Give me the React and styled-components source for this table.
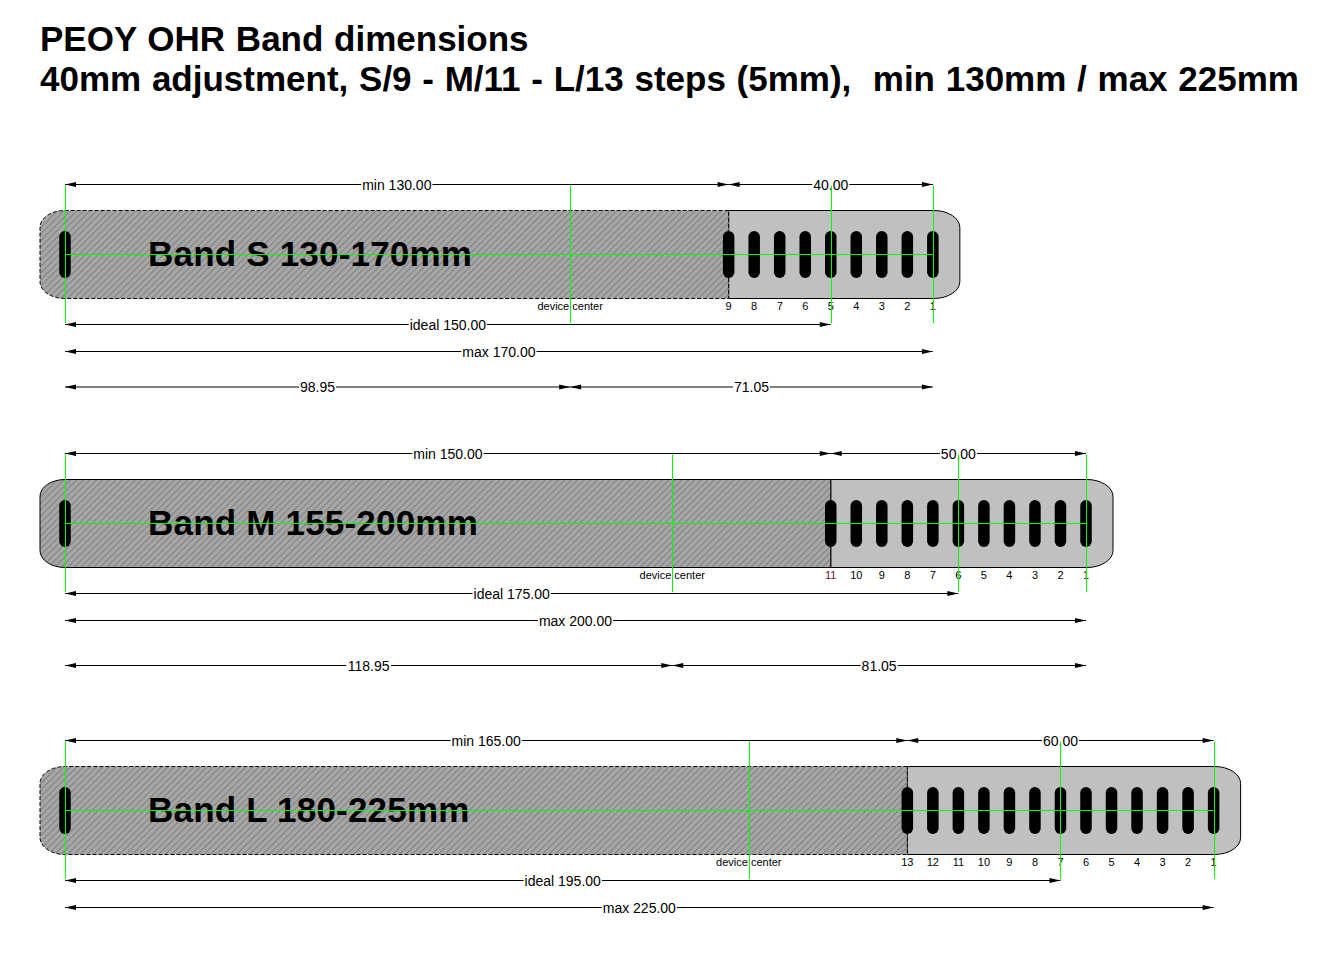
import React from "react";
import styled, { createGlobalStyle } from "styled-components";

const GlobalStyle = createGlobalStyle`
  html, body {
    margin: 0;
    padding: 0;
    background: #fff;
  }
  body {
    font-family: "Liberation Sans", Arial, sans-serif;
    color: #000;
  }
`;

const Page = styled.div`
  width: 1340px;
  height: 957px;
  overflow: hidden;
  background: #fff;
`;

const Header = styled.header`
  padding: 19px 0 0 40px;
`;

const TitleLine = styled.div`
  font-family: "Liberation Sans", Arial, sans-serif;
  font-weight: 700;
  font-size: 35px;
  line-height: 40px;
  word-spacing: 1px;
  white-space: pre;
`;

const Drawings = styled.div`
  margin-top: 71px;
  display: flex;
  flex-direction: column;
`;

const Figure = styled.svg`
  display: block;
  flex: none;
  overflow: visible;
`;

const BandTitle = styled.text`
  font-family: "Liberation Sans", Arial, sans-serif;
  font-weight: 700;
  font-size: 35px;
  letter-spacing: 0.2px;
  fill: #000;
`;

const DimLabel = styled.text`
  font-family: "Liberation Sans", Arial, sans-serif;
  font-size: 14px;
  fill: #000;
`;

const StepLabel = styled.text`
  font-family: "Liberation Sans", Arial, sans-serif;
  font-size: 11px;
  fill: ${({ $color }) => $color || "#000"};
`;

// scale of the drawing: px per mm, origin at the buckle slot
const K = 5.105;
const X0 = 65;
const px = (mm) => X0 + mm * K;

const GREEN = "#00ff00";

// rough Arial advance widths, enough to size the white gap under a label
const CW = { ".": 0.278, " ": 0.278, m: 0.833, i: 0.222, l: 0.222, x: 0.5 };
const textWidth = (s, size) =>
  s.split("").reduce((w, c) => w + (CW[c] ?? 0.556), 0) * size;

const Dim = ({ y, from, to, label }) => {
  const x1 = px(from);
  const x2 = px(to);
  const mid = (x1 + x2) / 2;
  const w = textWidth(label, 14) + 2;
  return (
    <g>
      <line x1={x1} y1={y} x2={x2} y2={y} stroke="#000" strokeWidth="1" />
      <polygon points={`${x1},${y} ${x1 + 11},${y - 2.5} ${x1 + 11},${y + 2.5}`} fill="#000" />
      <polygon points={`${x2},${y} ${x2 - 11},${y - 2.5} ${x2 - 11},${y + 2.5}`} fill="#000" />
      <rect x={mid - w / 2} y={y - 6} width={w} height={12} fill="#fff" />
      <DimLabel x={mid} y={y + 5} textAnchor="middle">
        {label}
      </DimLabel>
    </g>
  );
};

const Slot = ({ x, cy }) => (
  <rect x={x - 5.75} y={cy - 23.5} width="11.5" height="47" rx="5.75" fill="#000" />
);

const TOP = 40.5;
const BOTTOM = 128.5;
const CY = 84.5;

const BandFigure = ({ band }) => {
  const { id, name, min, max, steps, ideal, center, adj, split, height, dashed, oddStep } = band;
  const xs = px(min);
  const xr = px(max) + 27;
  const slots = Array.from({ length: steps }, (_, i) => ({
    n: i + 1,
    x: px(max - 5 * i),
  }));
  const hatchId = `hatch-${id}`;
  const greens = [0, center, ideal, max];

  return (
    <Figure width="1340" height={height} viewBox={`0 0 1340 ${height}`}>
      <defs>
        <pattern
          id={hatchId}
          patternUnits="userSpaceOnUse"
          width="4.6"
          height="4.6"
          patternTransform="rotate(45)"
        >
          <rect width="4.6" height="4.6" fill="#a6a6a6" />
          <line x1="0.5" y1="0" x2="0.5" y2="4.6" stroke="#767676" strokeWidth="0.8" />
        </pattern>
      </defs>

      <path
        d={`M${xs},${TOP} H${xr - 26} A26 17 0 0 1 ${xr} ${TOP + 17} V${BOTTOM - 17} A26 17 0 0 1 ${xr - 26} ${BOTTOM} H${xs} Z`}
        fill="#c0c0c0"
        stroke="#000"
        strokeWidth="1"
      />
      <path
        d={`M${xs},${TOP} H65 A25 17 0 0 0 40 ${TOP + 17} V${BOTTOM - 17} A25 17 0 0 0 65 ${BOTTOM} H${xs} Z`}
        fill={`url(#${hatchId})`}
        stroke="#000"
        strokeWidth="1"
        strokeDasharray={dashed ? "4 2" : undefined}
      />

      <Slot x={X0} cy={CY} />
      {slots.map((s) => (
        <Slot key={s.n} x={s.x} cy={CY} />
      ))}

      <BandTitle x="148" y="96">
        {name}
      </BandTitle>

      {slots.map((s) => (
        <StepLabel
          key={s.n}
          x={s.x}
          y="140"
          textAnchor="middle"
          $color={s.n === oddStep ? "#6e1030" : undefined}
        >
          {s.n}
        </StepLabel>
      ))}
      <StepLabel x={px(center)} y="140" textAnchor="middle">
        device center
      </StepLabel>

      <Dim y={14.5} from={0} to={min} label={`min ${min.toFixed(2)}`} />
      <Dim y={14.5} from={min} to={max} label={adj} />
      <Dim y={154.5} from={0} to={ideal} label={`ideal ${ideal.toFixed(2)}`} />
      <Dim y={181.5} from={0} to={max} label={`max ${max.toFixed(2)}`} />
      {split && (
        <>
          <Dim y={split} from={0} to={center} label={center.toFixed(2)} />
          <Dim y={split} from={center} to={max} label={(max - center).toFixed(2)} />
        </>
      )}

      <line x1={px(0)} y1={CY} x2={px(max)} y2={CY} stroke={GREEN} strokeWidth="1" />
      {greens.map((mm) => (
        <line
          key={mm}
          x1={Math.round(px(mm)) + 0.5}
          y1="15.5"
          x2={Math.round(px(mm)) + 0.5}
          y2="153"
          stroke={GREEN}
          strokeWidth="1"
        />
      ))}
    </Figure>
  );
};

const bands = [
  {
    id: "s",
    name: "Band S 130-170mm",
    min: 130,
    max: 170,
    steps: 9,
    ideal: 150,
    center: 98.95,
    adj: "40.00",
    split: 217,
    height: 268.5,
    dashed: true,
  },
  {
    id: "m",
    name: "Band M 155-200mm",
    min: 150,
    max: 200,
    steps: 11,
    ideal: 175,
    center: 118.95,
    adj: "50.00",
    split: 226.5,
    height: 287,
    dashed: false,
    oddStep: 11,
  },
  {
    id: "l",
    name: "Band L 180-225mm",
    min: 165,
    max: 225,
    steps: 13,
    ideal: 195,
    center: 133.95,
    adj: "60.00",
    height: 231,
    dashed: true,
  },
];

const App = () => {
  return (
    <Page>
      <GlobalStyle />
      <Header>
        <TitleLine>PEOY OHR Band dimensions</TitleLine>
        <TitleLine>{"40mm adjustment, S/9 - M/11 - L/13 steps (5mm),  min 130mm / max 225mm"}</TitleLine>
      </Header>
      <Drawings>
        {bands.map((b) => (
          <BandFigure key={b.id} band={b} />
        ))}
      </Drawings>
    </Page>
  );
};

export default App;
